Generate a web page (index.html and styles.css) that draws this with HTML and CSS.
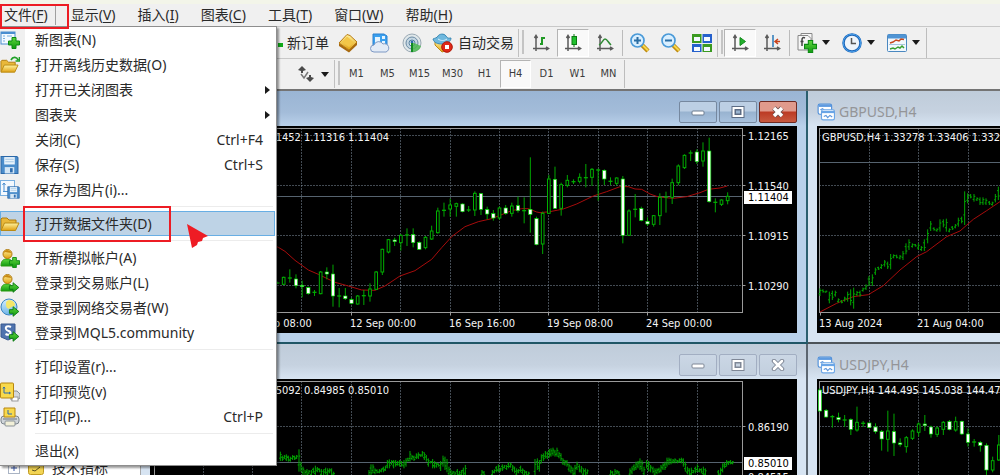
FILE: index.html
```html
<!DOCTYPE html>
<html lang="zh-CN">
<head>
<meta charset="utf-8">
<title>MetaTrader 4</title>
<link rel="stylesheet" href="styles.css">
</head>
<body>
<svg class="defs" aria-hidden="true">
  <defs>
    <linearGradient id="gold" x1="0" y1="0" x2="0" y2="1"><stop offset="0" stop-color="#fff3a0"/><stop offset="1" stop-color="#e0a010"/></linearGradient>
    <linearGradient id="sky" x1="0" y1="0" x2="0" y2="1"><stop offset="0" stop-color="#d6efff"/><stop offset="1" stop-color="#6db4e8"/></linearGradient>
    <linearGradient id="leaf" x1="0" y1="0" x2="0" y2="1"><stop offset="0" stop-color="#5fd63e"/><stop offset="1" stop-color="#109a10"/></linearGradient>
  </defs>
  <symbol id="plus" viewBox="0 0 12 12"><path d="M4 .5h4V4h3.500v4H8v3.500H4V8H.5V4H4z" fill="url(#leaf)" stroke="#0a8a12"/></symbol>
  <symbol id="arrow" viewBox="0 0 12 12"><path d="M1 4h4V.8L11.300 6 5 11.200V8H1z" fill="url(#leaf)" stroke="#0a7a12"/></symbol>
  <symbol id="folder" viewBox="0 0 20 16"><path d="M1 14V3l1-1h5l2 2h7v3" fill="#e9b83a" stroke="#b07c10"/><path d="M1 14.500 4.500 7H19l-3.500 7.500z" fill="url(#gold)" stroke="#b98a14"/></symbol>
  <symbol id="axes" viewBox="0 0 18 18"><path d="M4 2v15M1 14.500h15M2.500 4 4 1.500 5.500 4M14 13l2.500 1.500L14 16" fill="none" stroke="#5a5a5a" stroke-width="1.500"/></symbol>
  <symbol id="user" viewBox="0 0 20 20"><path d="M1 18c0-5 2-7 6-7s6 2 6 7z" fill="url(#leaf)" stroke="#2a9a10"/><circle cx="7.500" cy="6" r="4.500" fill="url(#gold)" stroke="#b07a10"/><path d="M3.500 5c1-4 6-4 8 0-3 0-5-1-6-1z" fill="#c98a12"/></symbol>
  <symbol id="charts" viewBox="0 0 16 16"><rect x="1" y="1" width="12" height="9" rx="1.500" fill="#fff" stroke="#4f8fd9"/><path d="M1.500 2.500h11" stroke="#5f9be0" stroke-width="2"/><path d="m3 6 2-1 1.500 1.500" fill="none" stroke="#5b95dc"/><rect x="4" y="6" width="11.500" height="9" rx="1.500" fill="#fff" stroke="#6aa5e6"/><path d="M4 8h11.500" stroke="#6aa5e6" stroke-width="2"/><path d="m6 12 2-1 1.500 2 2-2 2 1.500" fill="none" stroke="#5b95dc"/></symbol>
  <symbol id="floppy" viewBox="0 0 18 18"><path d="M1 1h15l1 1v15H1z" fill="#4b8dcb" stroke="#2b68a8"/><rect x="4" y="1.500" width="10" height="7" fill="#e9f3fb"/><path d="M5 3.500h8M5 6h8" stroke="#a6c8e4"/><rect x="4.500" y="11" width="9" height="6" fill="#d4e6f5"/><rect x="9.500" y="12" width="2.500" height="4" fill="#2f6cae"/></symbol>
</svg>

<div class="app">
  <header class="menubar">
    <button class="menubar-item open">文件(<u>F</u>)</button>
    <button class="menubar-item">显示(<u>V</u>)</button>
    <button class="menubar-item">插入(<u>I</u>)</button>
    <button class="menubar-item">图表(<u>C</u>)</button>
    <button class="menubar-item">工具(<u>T</u>)</button>
    <button class="menubar-item">窗口(<u>W</u>)</button>
    <button class="menubar-item">帮助(<u>H</u>)</button>
  </header>

  <div class="toolbar toolbar-main">
    <button class="tool tool-order"><svg width="5" height="12" viewBox="7 0 5 12"><path d="M6 6h6v4H6z" fill="#10a818"/></svg>新订单</button>
    <button class="tool" aria-label="市场报价"><svg width="20" height="20" viewBox="0 0 20 20"><path d="m1 10 10 7 8-8v3l-8 7.500L1 13z" fill="#a86a10"/><path d="m1 10 8-8.500 3 1 7 6.500-8 8z" fill="url(#gold)" stroke="#b87a14"/><path d="m4 9 5-5.500 7 6-5 4.500z" fill="#f3c648"/></svg></button>
    <button class="tool" aria-label="虚拟主机"><svg width="20" height="20" viewBox="0 0 20 20"><path d="M3 1h11l3 2v10H3z" fill="#3aa0ee" stroke="#2a80d0"/><path d="M5 4h5v7H5zM12 3h3v3h-3zM12 8h3v3h-3z" fill="#e4f4ff"/><path d="M4 19a3.500 3.500 0 0 1 0-7 5 5 0 0 1 9-1 4 4 0 0 1 3 8z" fill="#e3ebf6" stroke="#7d98c4"/></svg></button>
    <button class="tool" aria-label="信号"><svg width="20" height="20" viewBox="0 0 20 20"><circle cx="10" cy="10" r="9" fill="#dfe7ea" stroke="#9aa9b4"/><circle cx="10" cy="10" r="6" fill="#c4d6e2" stroke="#6b8aa4"/><circle cx="10" cy="10" r="3" fill="#eef4f4" stroke="#5680a0"/><path d="M10 10h2l7 3c-1 4-5 6-9 6z" fill="#4cb850" opacity=".85"/><circle cx="10" cy="9" r="1.500" fill="#2a6aa8"/><path d="M10 10v9" stroke="#118a22" stroke-width="2"/></svg></button>
    <button class="tool tool-auto"><svg width="22" height="20" viewBox="0 0 22 20"><path d="m3 8 14 1-4 9-3 1-7-7z" fill="url(#gold)" stroke="#c08a14"/><path d="M1 6c2-1 4-1 5-3s6-3 8 0 3 2 5 2c0 4-5 6-9 6S2 10 1 6z" fill="#6fb8de" stroke="#3a88b4"/><path d="M6 6c3 2 6 2 9 0" fill="none" stroke="#d8f0fa"/><circle cx="15" cy="14" r="5.300" fill="#e02818" stroke="#b01808"/><rect x="13" y="12" width="4" height="4" fill="#fff"/></svg>自动交易</button>
    <span class="grip"></span>
    <button class="tool" aria-label="柱状图"><svg width="18" height="18"><use href="#axes"/><path d="M10 11V3M10 4h3M8 10h2" stroke="#1f9a24" stroke-width="2" fill="none"/></svg></button>
    <button class="tool pressed" aria-label="蜡烛图"><svg width="18" height="18"><use href="#axes"/><path d="M10 0v13" stroke="#0a7a12"/><rect x="8" y="2.500" width="4.500" height="8" fill="#1fc02c" stroke="#0a7a12"/></svg></button>
    <button class="tool" aria-label="折线图"><svg width="18" height="18"><use href="#axes"/><path d="M3 11c3-1 4-6 6-6s3 3 6 6" stroke="#2f8a34" stroke-width="1.500" fill="none"/></svg></button>
    <span class="divider"></span>
    <button class="tool tool-narrow" aria-label="放大"><svg width="20" height="20" viewBox="0 0 20 20"><path d="m12 12 6 6" stroke="#c08c10" stroke-width="4.500"/><path d="m12.500 12 5.500 5.500" stroke="#f8d84a" stroke-width="2"/><circle cx="7.500" cy="7.500" r="6.500" fill="#d9efff" stroke="#4a9ad8" stroke-width="1.700"/><path d="M4 7.500h7M7.500 4v7" stroke="#2a6ea4" stroke-width="2"/></svg></button>
    <button class="tool tool-narrow" aria-label="缩小"><svg width="20" height="20" viewBox="0 0 20 20"><path d="m12 12 6 6" stroke="#c08c10" stroke-width="4.500"/><path d="m12.500 12 5.500 5.500" stroke="#f8d84a" stroke-width="2"/><circle cx="7.500" cy="7.500" r="6.500" fill="#d9efff" stroke="#4a9ad8" stroke-width="1.700"/><path d="M4 7.500h7" stroke="#2a6ea4" stroke-width="2"/></svg></button>
    <button class="tool tool-narrow" aria-label="平铺窗口"><svg width="20" height="20" viewBox="0 0 20 20"><path d="M0 1h10v9H0zM10 11h10v8H10z" fill="#3a9a20"/><path d="M10 1h10v9H10zM0 11h10v8H0z" fill="#2460cc"/><path d="M2 4h6v4H2zM12 4h6v4h-6zM2 14h6v4H2zM12 14h6v4h-6z" fill="#f4f9ff"/><path d="M0 10.500h20M10 1v18" stroke="#e8eef0"/></svg></button>
    <span class="grip"></span>
    <button class="tool pressed" aria-label="自动滚动"><svg width="18" height="18"><use href="#axes"/><path d="m9 3.500 5.500 4L9 11.500z" fill="#22b02c" stroke="#128a1a"/></svg></button>
    <button class="tool" aria-label="图表平移"><svg width="18" height="18"><use href="#axes"/><path d="M10 1v12" stroke="#2a78b8" stroke-width="1.500"/><path d="M17 7.500h-4M15 5l-3 2.500 3 2.500" stroke="#c8421c" stroke-width="1.500" fill="none"/></svg></button>
    <span class="divider"></span>
    <button class="tool tool-drop" aria-label="技术指标"><svg width="20" height="20" viewBox="0 0 20 20"><path d="M4 3V.5h11V13M1 2.500h10l3 3V17H1z" fill="#f6f6f6" stroke="#888"/><path d="M8 5c-2-1-3 0-3 2v6M3.500 8.500h3" stroke="#444" fill="none" stroke-width="1.500"/><use href="#plus" x="7" y="7" width="13" height="13"/></svg><span class="caret"></span></button>
    <button class="tool tool-drop" aria-label="时间周期"><svg width="20" height="20" viewBox="0 0 20 20"><circle cx="10" cy="10" r="8.500" fill="#eef4fa" stroke="#1c66b8" stroke-width="2.500"/><circle cx="10" cy="10" r="8.800" fill="none" stroke="#4aa0ec"/><path d="M9.500 5v5.500H14" stroke="#555" fill="none" stroke-width="1.500"/></svg><span class="caret"></span></button>
    <button class="tool tool-drop" aria-label="模板"><svg width="20" height="20" viewBox="0 0 20 20"><rect x=".5" y="1.500" width="19" height="17" rx="1" fill="#f2f8fd" stroke="#4a88c0"/><path d="M1 3.500h18" stroke="#4f94d4" stroke-width="4"/><path d="m3 10 3-1 3-2 3 1 2-2 3 .500" stroke="#c8481c" stroke-width="1.500" fill="none"/><path d="M2 11.500h16" stroke="#a8c4dc"/><path d="m3 16 3-1 2 1 3-2 2 1 2-2 2 2" stroke="#38a030" stroke-width="1.500" fill="none"/></svg><span class="caret"></span></button>
    <span class="toolbar-end"></span>
  </div>

  <div class="toolbar toolbar-period">
    <button class="tool tool-drop" aria-label="箭头"><svg width="18" height="18" viewBox="0 0 18 18"><path d="m1 5 4-4 4 4-3 1v2H4V6zM17 13l-4 4-4-4 3-1v-2h2v2z" fill="#4a4a4a"/><path d="m4 9 3 4 4-6" stroke="#777" stroke-width="1.500" fill="none"/></svg><span class="caret"></span></button>
    <span class="grip"></span>
    <button class="period">M1</button>
    <button class="period">M5</button>
    <button class="period period-wide">M15</button>
    <button class="period period-wide">M30</button>
    <button class="period">H1</button>
    <button class="period pressed">H4</button>
    <button class="period">D1</button>
    <button class="period">W1</button>
    <button class="period">MN</button>
    <span class="toolbar-end"></span>
  </div>

  <main class="workspace">
    <aside class="navigator">
      <div class="tree-row">
        <svg width="12" height="12" viewBox="0 0 12 12"><rect x=".5" y=".5" width="11" height="11" fill="#fff" stroke="#aab4c4"/><path d="M3 6h6M6 3v6" stroke="#3a58a8"/></svg>
        <svg width="16" height="14" viewBox="0 0 16 14"><rect x=".5" y=".5" width="15" height="13" rx="2" fill="#f2d454" stroke="#c09a20"/><path d="m4 9 3 1 5-4" stroke="#5a5020" fill="none"/></svg>
        <span>技术指标</span>
      </div>
    </aside>
    <div class="mdi">
      <section class="win win-left active">
        <div class="titlebar">
          <button class="win-btn" aria-label="最小化"><svg width="14" height="12"><rect x="1" y="5" width="12" height="4" rx="1" fill="#fff" stroke="#6c7c90"/></svg></button>
          <button class="win-btn" aria-label="最大化"><svg width="14" height="12"><rect x="2.500" y="2" width="9" height="8" fill="none" stroke="#5c6c84" stroke-width="4"/><rect x="2.500" y="2" width="9" height="8" fill="none" stroke="#fff" stroke-width="2"/><rect x="4.500" y="4" width="5" height="4" fill="#9ab4d0" stroke="#5c6c84"/></svg></button>
          <button class="win-btn win-close" aria-label="关闭"><svg width="14" height="12"><path d="m3 2 8 8M11 2l-8 8" stroke="#6a4a4a" stroke-width="5"/><path d="m3 2 8 8M11 2l-8 8" stroke="#fff" stroke-width="3.500"/></svg></button>
        </div>
        <div class="chart"><svg id="eurusd" width="645" height="207" viewBox="152 126 645 207"></svg></div>
      </section>
      <section class="win win-right">
        <div class="titlebar"><svg width="18" height="18"><use href="#charts"/></svg><span class="title">GBPUSD,H4</span></div>
        <div class="chart"><svg id="gbpusd" width="400" height="207" viewBox="817 126 400 207"></svg></div>
      </section>
      <section class="win win-left">
        <div class="titlebar">
          <button class="win-btn" aria-label="最小化"><svg width="14" height="12"><rect x="1" y="5" width="12" height="4" rx="1" fill="#fff" stroke="#7f8796"/></svg></button>
          <button class="win-btn" aria-label="最大化"><svg width="14" height="12"><rect x="2.500" y="2" width="9" height="8" fill="none" stroke="#7f8796" stroke-width="4"/><rect x="2.500" y="2" width="9" height="8" fill="none" stroke="#fff" stroke-width="2"/><rect x="4.500" y="4" width="5" height="4" fill="#c8d4e2" stroke="#7f8796"/></svg></button>
          <button class="win-btn" aria-label="关闭"><svg width="14" height="12"><path d="m3 2 8 8M11 2l-8 8" stroke="#7f8796" stroke-width="4.500" stroke-linecap="round"/><path d="m3 2 8 8M11 2l-8 8" stroke="#fff" stroke-width="2.500" stroke-linecap="round"/></svg></button>
        </div>
        <div class="chart"><svg id="eurgbp" width="645" height="207" viewBox="152 379 645 207"></svg></div>
      </section>
      <section class="win win-right">
        <div class="titlebar"><svg width="18" height="18"><use href="#charts"/></svg><span class="title">USDJPY,H4</span></div>
        <div class="chart"><svg id="usdjpy" width="400" height="207" viewBox="817 379 400 207"></svg></div>
      </section>
    </div>
  </main>
</div>

<nav class="menu" aria-label="文件">
  <button class="item"><span class="icon"><svg width="20" height="18" viewBox="0 0 20 18"><rect x="1" y="1" width="14" height="12" fill="#f4faff" stroke="#4a8ed0"/><path d="M1 2h14" stroke="#4a8ed0" stroke-width="2"/><path d="M3 5h2M3 7.500h2M3 10h2M7 5h5" stroke="#7ab0e0"/><use href="#plus" x="8" y="6" width="12" height="12"/></svg></span><span class="label">新图表(N)</span></button>
  <button class="item"><span class="icon"><svg width="20" height="18" viewBox="0 0 20 18"><use href="#folder" y="2" width="19" height="16"/><path d="M11 4c2-4 6-3 7 0M19.500 1v4h-4" fill="none" stroke="#1fa028" stroke-width="1.700"/></svg></span><span class="label">打开离线历史数据(O)</span></button>
  <button class="item"><span class="icon"></span><span class="label">打开已关闭图表</span><span class="submenu"></span></button>
  <button class="item"><span class="icon"></span><span class="label">图表夹</span><span class="submenu"></span></button>
  <button class="item"><span class="icon"></span><span class="label">关闭(C)</span><kbd>Ctrl+F4</kbd></button>
  <button class="item"><span class="icon"><svg width="20" height="20"><use href="#floppy" width="19" height="20"/></svg></span><span class="label">保存(S)</span><kbd>Ctrl+S</kbd></button>
  <button class="item"><span class="icon"><svg width="20" height="19" viewBox="0 0 20 19"><rect x=".5" y=".5" width="14" height="15" fill="#f4f9fe" stroke="#7ab0e0"/><path d="M4 3v9M2.500 5 4 3l1.500 2M3 11.500h8" stroke="#4a8ed0" fill="none"/><use href="#floppy" x="7" y="6" width="13" height="13"/></svg></span><span class="label">保存为图片(i)...</span></button>
  <hr>
  <button class="item hover"><span class="icon"><svg width="20" height="16"><use href="#folder" width="20" height="16"/></svg></span><span class="label">打开数据文件夹(D)</span></button>
  <hr>
  <button class="item"><span class="icon"><svg width="20" height="20"><use href="#user" width="20" height="20"/><use href="#plus" x="9" y="9" width="11" height="11"/></svg></span><span class="label">开新模拟帐户(A)</span></button>
  <button class="item"><span class="icon"><svg width="20" height="20"><use href="#user" width="20" height="20"/><use href="#arrow" x="8" y="9" width="12" height="11"/></svg></span><span class="label">登录到交易账户(L)</span></button>
  <button class="item"><span class="icon"><svg width="20" height="20" viewBox="0 0 20 20"><circle cx="9" cy="9" r="8" fill="url(#sky)" stroke="#3a84c0"/><path d="M9 2c4 0 6 3 6 5s-4 1-5 3-4 0-4-3 0-4 3-5z" fill="#f4e66a"/><use href="#arrow" x="8" y="8" width="12" height="11"/></svg></span><span class="label">登录到网络交易者(W)</span></button>
  <button class="item"><span class="icon"><svg width="20" height="20" viewBox="0 0 20 20"><path d="M1 1h14v13l-7 3-7-3z" fill="#4f73ae" stroke="#3a5a90"/><path d="M11 4c-3-1.500-6-.5-5 2s5 1.500 4.500 4-3 2-5 1" fill="none" stroke="#fff" stroke-width="2"/><use href="#arrow" x="8" y="8" width="12" height="11"/></svg></span><span class="label">登录到MQL5.community</span></button>
  <hr>
  <button class="item"><span class="icon"></span><span class="label">打印设置(r)...</span></button>
  <button class="item"><span class="icon"><svg width="20" height="20" viewBox="0 0 20 20"><path d="M11 9h6l3 3v4l-3 2h-6z" fill="#d4d8dc" stroke="#8a9298"/><rect x="12" y="15" width="6" height="4" fill="#fff" stroke="#999"/><rect x=".5" y="1" width="13" height="15" rx="1" fill="#f8d94c" stroke="#b8860e"/><path d="M4 5v6h6M3 6.500 4 5l1 1.500M9 10l1.500 1L9 12" fill="none" stroke="#2a6ab0"/></svg></span><span class="label">打印预览(v)</span></button>
  <button class="item"><span class="icon"><svg width="20" height="20" viewBox="0 0 20 20"><rect x="1" y="9" width="18" height="8" rx="3" fill="#d0d5da" stroke="#7c858c"/><path d="M4 1h11v9H4z" fill="#f8d94c" stroke="#b8860e"/><path d="M8 3v4h4" stroke="#2a6ab0" fill="none"/><path d="M3 12h14" stroke="#6c757c"/><rect x="5" y="14" width="10" height="5" rx="1" fill="#f2f0d8" stroke="#8a9298"/></svg></span><span class="label">打印(P)...</span><kbd>Ctrl+P</kbd></button>
  <hr>
  <button class="item"><span class="icon"></span><span class="label">退出(x)</span></button>
</nav>

<div class="mark mark-file"></div>
<div class="mark mark-folder"></div>
<svg class="pointer" width="24" height="25" viewBox="0 0 24 25"><path d="M1 0 22 12l-5 2-1 3-4 1-1 3-5 3z" fill="#ee1c24"/></svg>
<script src="charts.js"></script>
</body>
</html>
```

FILE: styles.css
```css
* { box-sizing: border-box; }

body {
  margin: 0;
  height: 100vh;
  overflow: hidden;
  position: relative;
  background: #f0f0f0;
  color: #2a2a2a;
  font: 14px/20px "Noto Sans", "Noto Sans CJK SC", sans-serif;
}

button {
  border: 0;
  padding: 0;
  background: none;
  color: inherit;
  font: inherit;
  white-space: nowrap;
}

svg { flex: none; }
.defs { position: absolute; width: 0; height: 0; }

.app {
  height: 100%;
  display: flex;
  flex-direction: column;
  border-top: 4px solid #f3f5e9;
}

/* Menu bar */
.menubar {
  flex: none;
  height: 23px;
  display: flex;
  align-items: center;
  gap: 22px;
  padding-left: 4px;
  border-bottom: 1px solid #c8c8c8;
}
.menubar-item.open {
  padding-right: 7px;
  margin-right: -7px;
  border-right: 1px solid #a0a0a0;
}
.menubar-item u { text-underline-offset: 2px; text-decoration-thickness: 1px; }

/* Toolbars */
.toolbar {
  flex: none;
  display: flex;
  align-items: center;
  padding-left: 278px;
}
.toolbar-main { height: 32px; border-bottom: 1px solid #c8c8c8; }
.toolbar-period { height: 30px; }
.tool {
  width: 32px;
  height: 28px;
  display: flex;
  align-items: center;
  justify-content: center;
  gap: 4px;
}
.tool-order { width: 54px; justify-content: flex-start; }
.tool-auto { width: 90px; }
.tool-narrow { width: 31px; }
.tool-drop { width: 45px; gap: 5px; }
.toolbar-period .tool-drop { width: 56px; padding-left: 13px; gap: 6px; }
.pressed {
  background: #f9f9f9;
  border: 1px solid #fff;
  border-top-color: #b4b4b4;
  border-left-color: #b4b4b4;
}
.caret {
  border: 4px solid transparent;
  border-top: 5px solid #1a1a1a;
  border-bottom: 0;
}
.grip {
  width: 7px;
  height: 28px;
  border-left: 1px solid #c0c0c0;
  background: linear-gradient(#c4c4c4, #c4c4c4) 3px 1px / 2px 24px no-repeat;
}
.divider { width: 3px; height: 26px; background: linear-gradient(#bbb, #bbb) 1px 0 / 1px 100% no-repeat; }
.toolbar-end { width: 1px; height: 30px; background: #bdbdbd; }
.toolbar-period .toolbar-end { height: 28px; }
.period {
  width: 31px;
  height: 28px;
  color: #3c3c3c;
  font: 11px/20px "DejaVu Sans Condensed", "DejaVu Sans", sans-serif;
}
.period-wide { width: 33px; }

/* Workspace */
.workspace {
  flex: 1;
  min-height: 0;
  display: flex;
  overflow: hidden;
  border-top: 2px solid #747474;
}
.navigator {
  width: 141px;
  flex: none;
  display: flex;
  flex-direction: column;
  justify-content: flex-end;
  background: #fff;
  border-right: 1px solid #a8a8a8;
}
.tree-row {
  height: 14px;
  line-height: 14px;
  display: flex;
  align-items: center;
  gap: 8px;
  padding-left: 8px;
}
.mdi {
  flex: 1;
  min-width: 0;
  display: grid;
  grid-template-columns: 667fr 192fr;
  align-content: start;
}
.win {
  min-width: 0;
  padding: 0 9px 9px;
  background: #d7e4f2;
  border-right: 2px solid #5c6670;
  border-bottom: 2px solid #4c5358;
}
.win-right { padding-right: 0; border-right: 0; }
.active {
  background: #b9d1ea;
  border-right-color: #2b5f6e;
  border-bottom-color: #1f5666;
}
.titlebar {
  height: 35px;
  display: flex;
  align-items: center;
  margin: 0 -9px;
  padding: 6px 9px 0;
  background: linear-gradient(#bfccda, #c6d2e0 60%, #d7e4f2);
}
.active .titlebar { background: linear-gradient(#9ab5d4, #a3bcd9 60%, #b9d1ea); }
.win-left .titlebar { justify-content: flex-end; gap: 2px; }
.win-right .titlebar { gap: 4px; }
.title { color: #949598; }
.win-btn {
  width: 38px;
  height: 22px;
  display: flex;
  align-items: center;
  justify-content: center;
  border: 1px solid #a2aec2;
  border-radius: 2px;
  background: linear-gradient(#cbd7e5, #c2cfde);
}
.active .win-btn {
  border-color: #76889f;
  background: linear-gradient(#bccfe4 45%, #98b3d0 50%, #a8c2de);
}
.active .win-close {
  border-color: #6e2a22;
  background: linear-gradient(#e09a8c 45%, #bc3a24 50%, #c85a40);
}
.chart {
  display: flex;
  overflow: hidden;
  background: #000;
}
.win-left .chart { justify-content: flex-end; }

/* Chart drawing */
.grid { stroke: #8796a6; stroke-width: 1; stroke-dasharray: 1 2; fill: none; }
.frame { stroke: #9a9a9a; fill: none; }
.price { stroke: #56636f; }
.average { stroke: #a80c0c; fill: none; }
.bar { stroke: #00a800; fill: none; }
.up { stroke: #00b000; fill: #000; }
.down { stroke: #00d800; fill: #fff; }
.chart text { fill: #f4f4f4; font: 11px "DejaVu Sans Condensed", "DejaVu Sans", sans-serif; }
.chart .tag { fill: #000; }
.tag-box { fill: #fff; }

/* File menu */
.menu {
  position: absolute;
  top: 26px;
  left: 0;
  width: 277px;
  padding: 0 1px 2px 0;
  border: 1px solid #8e8e8e;
  border-left: 0;
  background: linear-gradient(90deg, #f0f0f0 25px, #fff 25px);
  box-shadow: 2px 2px 2px rgba(0, 0, 0, .4);
}
.item {
  width: 100%;
  height: 25px;
  display: flex;
  align-items: center;
  padding-right: 12px;
  text-align: left;
}
.icon { width: 35px; flex: none; display: flex; }
.label { flex: 1; }
.item kbd { font: inherit; }
.item.hover { background: #bed3e6; box-shadow: inset 0 0 0 1px #68aee4; }
.submenu {
  margin-right: -7px;
  border: 4px solid transparent;
  border-left: 5px solid #1a1a1a;
  border-right: 0;
}
.menu hr {
  height: 1px;
  margin: 4px 2px 4px 35px;
  border: 0;
  background: #ececec;
}

/* Annotations over the window */
.mark { position: absolute; border: 2px solid #ed1c24; pointer-events: none; }
.mark-file { top: 4px; left: 0; width: 69px; height: 25px; }
.mark-folder { top: 206px; left: 23px; width: 148px; height: 36px; }
.pointer { position: absolute; top: 224px; left: 186px; }
```

FILE: charts.js
```js
(function () {
  var NS = 'http://www.w3.org/2000/svg';

  function add(parent, name, attrs, text) {
    var node = document.createElementNS(NS, name);
    for (var key in attrs) node.setAttribute(key, attrs[key]);
    if (text) node.textContent = text;
    parent.appendChild(node);
    return node;
  }

  function base(id, o) {
    var svg = document.getElementById(id);
    o.gridX.forEach(function (x) { add(svg, 'path', { 'class': 'grid', d: 'M' + x + ' ' + o.top + 'V' + o.bottom }); });
    o.gridY.forEach(function (y) { add(svg, 'path', { 'class': 'grid', d: 'M' + o.left + ' ' + y + 'H' + o.right }); });
    add(svg, 'path', { 'class': 'price', d: 'M' + o.left + ' ' + o.price + 'H' + o.right });
    add(svg, 'rect', { 'class': 'frame', x: o.left, y: o.top, width: o.right - o.left, height: o.bottom - o.top });
    (o.ticksX || []).forEach(function (x) { add(svg, 'path', { 'class': 'frame', d: 'M' + x + ' ' + o.bottom + 'v3' }); });
    (o.ticksY || []).forEach(function (y) { add(svg, 'path', { 'class': 'frame', d: 'M' + o.right + ' ' + y + 'h3' }); });
    return svg;
  }

  /* Data is in thirds of a pixel, from the layer's own origin. */
  function layer(svg, x, y) {
    return add(svg, 'g', { transform: 'translate(' + x + ' ' + y + ') scale(.33333)', 'stroke-width': 3 });
  }

  /* Row: high, body top, body bottom, low, kind (u, d or x for a doji). */
  function candles(g, start, step, rows) {
    rows.trim().split(/\s+/).forEach(function (row, i) {
      var c = row.split(','), x = start + i * step;
      add(g, 'path', { 'class': 'bar', d: 'M' + x + ' ' + c[0] + 'V' + c[3] });
      if (c[4] === 'x') add(g, 'path', { 'class': 'bar', d: 'M' + (x - 6) + ' ' + (+c[1] + 1) + 'h12', 'stroke-width': 4 });
      else if (c[4] === 'u') add(g, 'rect', { 'class': 'up', x: x - 4, y: c[1], width: 8, height: c[2] - c[1] });
      else add(g, 'rect', { 'class': 'down', 'stroke-width': 2, x: x - 5, y: c[1], width: 10, height: c[2] - c[1] });
    });
  }

  /* Row: x, high, low. */
  function bars(g, rows) {
    var d = '';
    rows.trim().split(/\s+/).forEach(function (row, i) {
      var b = row.split(',').map(Number), h = b[2] - b[1], rise = i % 3 !== 1;
      d += 'M' + b[0] + ' ' + b[1] + 'V' + b[2];
      d += 'M' + (b[0] - 4) + ' ' + (b[1] + h * (rise ? .7 : .3)) + 'h4';
      d += 'M' + b[0] + ' ' + (b[1] + h * (rise ? .3 : .7)) + 'h4';
    });
    add(g, 'path', { 'class': 'bar', d: d });
  }

  function text(svg, x, y, s, attrs) {
    add(svg, 'text', Object.assign({ x: x, y: y, 'xml:space': 'preserve' }, attrs || {}), s);
  }

  function tag(svg, x, y, s) {
    add(svg, 'rect', { 'class': 'tag-box', x: x - 4, y: y - 10, width: 48, height: 13 });
    text(svg, x, y, s, { 'class': 'tag' });
  }

  var columns = [203.5, 252.5, 301.5, 351.5, 400.5, 450.5, 499.5, 548.5, 598.5, 647.5, 697.5];
  var rightColumns = [869.5, 918.5, 968.5];

  /* EURUSD */
  var eu = base('eurusd', { left: 154.5, right: 742.5, top: 128.5, bottom: 312.5, price: 196.5, gridX: columns, gridY: [135.5, 185.5, 235.5, 285.5], ticksX: [252.5, 351.5, 450.5, 548.5, 647.5], ticksY: [135.5, 185.5, 235.5, 285.5] });
  var g = layer(eu, 275, 90);
  add(g, 'polyline', { 'class': 'average', points: '0,468 10,472 30,484 60,511 100,540 130,553 180,577 220,588 260,600 300,601 330,588 375,558 420,542 470,508 500,473 530,440 570,410 610,395 650,386 690,370 710,362 740,356 760,356 785,366 795,368 825,365 865,357 905,342 955,318 995,305 1035,290 1060,290 1080,297 1100,298 1125,312 1150,321 1195,325 1235,320 1275,308 1300,298 1335,294 1357,288' });
  candles(g, 7.5, 18.5,
    '575,578,580,582,x 560,562,583,585,u 538,563,566,578,x 553,567,587,595,d 572,586,590,622,d 590,593,611,614,d 600,606,610,618,x 543,546,611,613,u 532,546,552,568,d 524,552,618,650,d ' +
    '594,617,619,652,x 594,618,626,630,d 624,629,640,643,d 615,618,642,644,u 600,616,618,645,x 580,597,618,635,u 543,546,598,600,u 476,478,546,555,u 447,449,486,490,u 443,450,455,468,d ' +
    '432,436,458,482,u 415,434,436,468,x 415,434,458,472,d 454,457,478,480,d 438,442,473,478,u 407,423,447,450,u 353,363,428,431,u 338,360,362,380,x 326,345,357,380,u 338,341,349,380,u ' +
    '340,342,365,367,d 348,359,363,366,x 304,310,360,378,u 309,311,358,375,d 350,359,372,388,d 360,371,384,392,d 350,354,384,390,u 345,354,370,374,d 338,348,370,380,u 320,347,362,368,d ' +
    '322,361,363,400,x 202,358,373,428,d 380,386,464,466,d 365,370,462,492,u 255,267,370,372,u 230,268,355,357,d 278,284,355,377,u 255,271,286,292,u 268,274,277,282,x 250,262,274,280,u ' +
    '222,262,264,292,x 234,238,262,288,u 236,239,242,332,x 238,241,267,285,d 262,273,276,285,x 262,264,280,286,u 258,267,436,460,d 358,363,436,438,u 312,357,361,382,x 350,356,391,394,d ' +
    '382,394,402,408,d 375,377,403,410,u 310,322,377,405,u 305,320,324,368,x 266,278,322,342,u 223,228,278,286,u 193,196,233,237,u 181,188,193,213,x 178,186,215,222,d 157,183,213,230,u ' +
    '143,183,335,338,d 325,336,340,367,x 328,330,343,348,u 307,319,332,343,u');
  text(eu, 389, 141, '1452 1.11316 1.11404', { 'text-anchor': 'end' });
  text(eu, 252, 327, '9 Sep 08:00');
  text(eu, 350, 327, '12 Sep 00:00');
  text(eu, 449, 327, '16 Sep 16:00');
  text(eu, 547, 327, '19 Sep 08:00');
  text(eu, 646, 327, '24 Sep 00:00');
  text(eu, 748, 140, '1.12165');
  text(eu, 748, 190, '1.11540');
  text(eu, 748, 240, '1.10915');
  text(eu, 748, 290, '1.10290');
  tag(eu, 748, 201, '1.11404');

  /* GBPUSD */
  var gb = base('gbpusd', { left: 819.5, right: 1300, top: 128.5, bottom: 312.5, price: 162.5, gridX: rightColumns, gridY: [135.5, 185.5, 235.5, 285.5], ticksX: [820.5, 918.5] });
  g = layer(gb, 800, 120);
  add(g, 'polyline', { 'class': 'average', points: '60,576 110,550 160,530 205,524 250,497 300,450 350,410 380,395 440,350 480,333 520,298 560,272 600,245' });
  bars(g,
    '60,505,528 69,508,518 78,512,518 88,515,550 97,512,540 106,512,530 115,535,548 125,540,550 134,530,545 143,515,545 152,508,556 161,503,566 171,513,528 180,512,530 189,503,515 198,493,510 ' +
    '207,468,498 217,463,498 226,443,465 235,440,450 244,432,447 254,420,440 263,425,447 272,402,448 281,403,415 290,404,415 300,405,418 309,393,420 318,370,403 327,358,390 337,370,383 346,372,380 ' +
    '355,370,390 364,378,393 373,358,393 383,328,370 392,303,333 402,322,332 411,325,335 420,298,335 430,298,322 439,296,335 448,325,337 457,318,330 466,312,325 475,293,320 485,290,310 494,214,315 ' +
    '503,220,250 512,222,235 522,222,245 531,232,243 540,232,255 549,232,255 558,235,255 568,243,255 577,245,257 586,222,247 595,200,240');
  text(gb, 822, 141, 'GBPUSD,H4  1.33278 1.33406 1.33278');
  text(gb, 819, 327, '13 Aug 2024');
  text(gb, 917, 327, '21 Aug 04:00');

  /* EURGBP */
  var eg = base('eurgbp', { left: 154.5, right: 742.5, top: 381.5, bottom: 565.5, price: 462.5, gridX: columns, gridY: [426.5, 476.5], ticksY: [426.5] });
  bars(layer(eg, 275, 335),
    '16,350,378 22,362,378 28,360,372 34,358,378 40,362,380 46,365,380 53,360,375 59,362,375 65,360,372 72,343,410 78,380,410 84,395,420 90,405,430 96,402,425 102,405,418 109,405,425 115,398,415 121,392,425 127,396,412 133,400,412 139,402,425 146,403,430 152,398,418 158,400,425 164,400,415 170,400,425 176,410,430 ' +
    '282,405,430 288,388,425 294,388,415 300,400,418 306,403,415 313,402,415 319,400,412 325,395,412 331,392,408 337,375,400 343,373,400 350,375,390 356,375,400 362,375,395 368,378,392 374,375,395 380,378,395 387,375,400 393,370,395 399,368,380 405,348,380 411,360,375 417,362,378 424,355,372 430,352,372 436,358,365 442,348,365 448,352,375 454,360,380 460,370,395 467,378,385 473,372,400 479,378,400 485,382,398 491,385,395 497,378,408 504,362,395 510,365,405 516,372,412 522,395,425 528,405,425 534,408,418 540,410,425 547,402,425 553,408,425 559,405,425 565,398,425 571,390,425 ' +
    '621,405,425 627,408,425 652,405,425 658,403,415 664,393,412 670,388,412 676,398,410 682,388,408 688,390,400 695,390,405 701,382,400 707,383,398 713,390,410 719,395,415 725,400,425 731,402,415 737,392,412 743,400,418 749,405,425 755,408,425 761,410,425 780,372,425 787,370,405 793,375,410 799,358,385 805,355,378 811,348,370 817,350,372 823,342,368 ' +
    '828,340,365 834,338,362 840,345,365 846,338,365 852,350,370 858,355,378 864,370,390 870,375,392 876,375,395 882,385,410 888,392,415 894,398,425 900,390,425 906,380,405 913,388,412 919,393,415 925,400,425 931,400,425 937,403,418 1007,405,425 1013,408,425 1020,402,425 1026,405,418 1032,408,425 ' +
    '1065,400,425 1071,395,418 1077,388,408 1083,380,405 1089,378,400 1095,370,405 1101,376,410 1107,395,425 1115,375,400 1121,378,410 1127,390,412 1134,395,415 1140,400,425 1146,400,418 1152,398,415 1158,390,412 1164,385,405 1170,380,405 1176,368,395 1182,368,390 1188,370,388 1194,372,385 1200,370,385 1207,375,385 1213,370,382 1219,368,385 1225,370,395 1231,380,410 1237,395,418 1243,400,425 1249,398,425 1255,405,415 1261,395,415 1267,388,410 1273,400,412 1279,400,415 1285,395,425 1291,400,425 ' +
    '1330,405,425 1337,398,425 1343,385,412 1349,382,400 1355,375,395 1361,378,390 1367,375,388 1373,378,388');
  text(eg, 389, 394, '5092 0.84985 0.85010', { 'text-anchor': 'end' });
  text(eg, 748, 431, '0.86190');
  text(eg, 748, 481, '0.84515');
  tag(eg, 748, 467, '0.85010');

  /* USDJPY */
  var uj = base('usdjpy', { left: 819.5, right: 1300, top: 381.5, bottom: 565.5, price: 392.5, gridX: rightColumns, gridY: [426.5, 476.5] });
  candles(layer(uj, 550, 335), 810, 18.5,
    '160,165,228,230,d 222,226,246,248,d 240,244,247,278,x 233,248,254,262,d 240,254,257,276,x 250,254,283,300,d 215,262,285,290,u 258,264,268,276,x 262,264,278,280,d 265,276,290,296,d ' +
    '285,290,312,347,d 227,288,313,350,u 236,290,324,363,d 310,324,328,335,d 303,308,335,353,u 283,288,310,315,u 262,267,292,305,u 240,267,272,288,d 272,276,297,308,d 275,279,298,306,u ' +
    '258,262,283,300,u 255,260,284,286,d 245,260,285,290,u 257,259,297,300,d 280,297,322,335,d 312,320,323,335,x 318,322,331,350,d 325,331,405,420,d 365,377,405,412,u 300,330,375,378,u');
  text(uj, 822, 394, 'USDJPY,H4  144.495 145.038 144.472');
})();
```
